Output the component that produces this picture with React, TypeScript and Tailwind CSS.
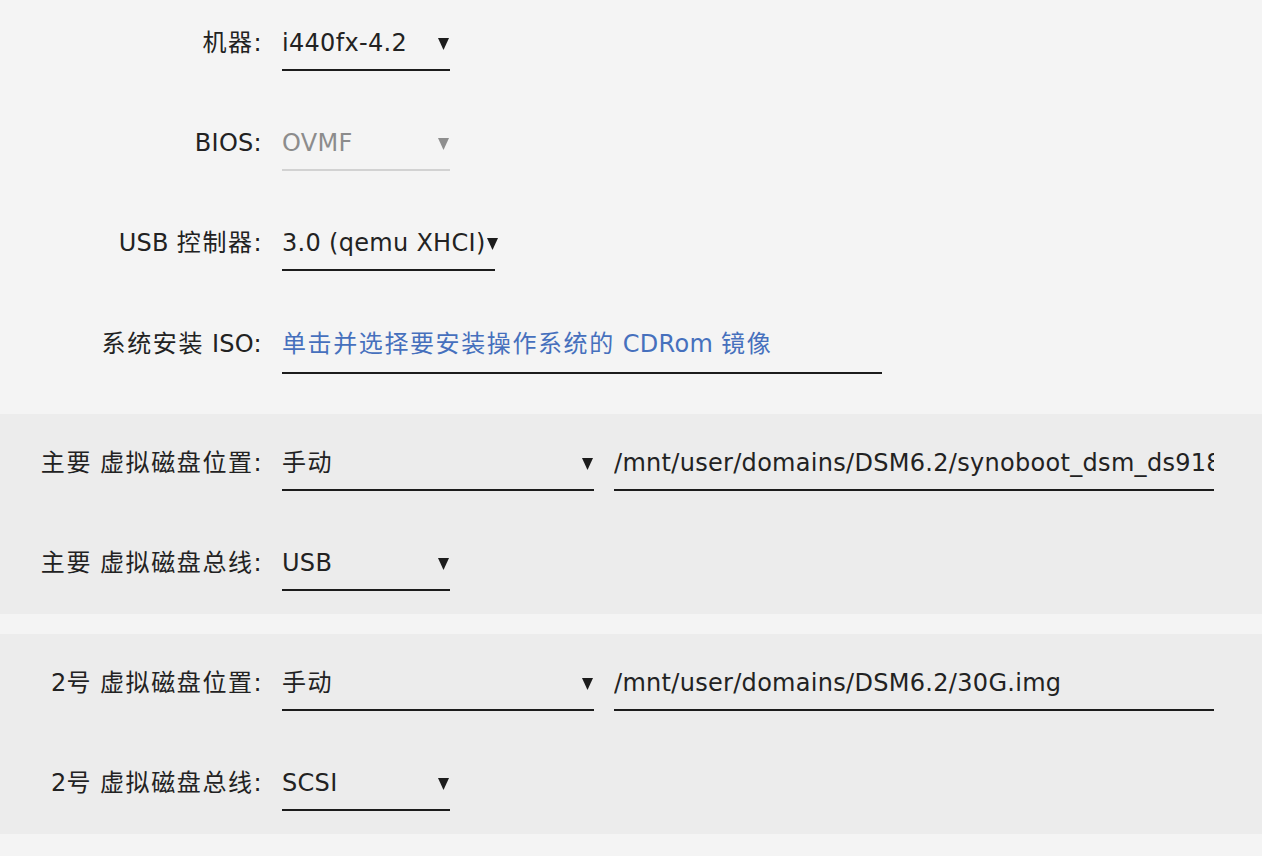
const font = {
  fontFamily: '"DejaVu Sans", "Noto Sans CJK SC", sans-serif',
};

// CJK runs sit a little wider than Noto's default advance in the reference
const T = ({ text }: { text: string }) => (
  <>
    {text.split(/([\u3000-\u9fff\uff00-\uffef]+)/).map((part, i) =>
      /[\u3000-\u9fff\uff00-\uffef]/.test(part) ? (
        <span key={i} className="tracking-[1.6px]">
          {part}
        </span>
      ) : (
        part
      )
    )}
  </>
);

const Arrow = ({ muted = false }: { muted?: boolean }) => (
  <svg width="11" height="12" viewBox="0 0 11 12" className="shrink-0">
    <polygon points="0,0 11,0 5.5,12" fill={muted ? "#8e8e8e" : "#1c1c1c"} />
  </svg>
);

const Label = ({ text }: { text: string }) => (
  <div className="w-[262px] shrink-0 text-right leading-[51px] text-[#222] whitespace-nowrap">
    <T text={text} />
  </div>
);

const Select = ({
  value,
  width,
  muted = false,
  tight = false,
}: {
  value: string;
  width: string;
  muted?: boolean;
  tight?: boolean;
}) => (
  <div
    className={`${width} h-[53px] flex items-center border-b-2 ${
      tight ? "gap-[1px]" : "justify-between pr-[1px]"
    } ${muted ? "border-[#d2d2d2] text-[#8c8c8c]" : "border-[#1c1c1c] text-[#222]"}`}
  >
    <span className="leading-[51px] whitespace-nowrap">
      <T text={value} />
    </span>
    <Arrow muted={muted} />
  </div>
);

const Input = ({ value, width, link = false }: { value: string; width: string; link?: boolean }) => (
  <div
    className={`${width} h-[53px] border-b-2 border-[#1c1c1c] overflow-hidden whitespace-nowrap leading-[51px] ${
      link ? "text-[#4670bd]" : "text-[#222]"
    }`}
  >
    <T text={value} />
  </div>
);

const Row = ({ top, children }: { top: string; children: React.ReactNode }) => (
  <div className={`h-[100px] flex items-start gap-[20px] ${top}`}>{children}</div>
);

export default function App() {
  return (
    <div
      className="w-[1262px] h-[856px] bg-[#f4f4f4] text-[24px] tracking-[0.3px] overflow-hidden"
      style={font}
    >
      <div className="h-[414px]">
        <Row top="pt-[18px]">
          <Label text="机器:" />
          <Select value="i440fx-4.2" width="w-[168px]" />
        </Row>
        <Row top="pt-[18px]">
          <Label text="BIOS:" />
          <Select value="OVMF" width="w-[168px]" muted />
        </Row>
        <Row top="pt-[18px]">
          <Label text="USB 控制器:" />
          <Select value="3.0 (qemu XHCI)" width="w-[213px]" tight />
        </Row>
        <Row top="pt-[19px]">
          <Label text="系统安装 ISO:" />
          <Input value="单击并选择要安装操作系统的 CDRom 镜像" width="w-[600px] h-[55px]" link />
        </Row>
      </div>

      <div className="h-[200px] bg-[#ececec]">
        <Row top="pt-[24px]">
          <Label text="主要 虚拟磁盘位置:" />
          <Select value="手动" width="w-[312px]" />
          <Input value="/mnt/user/domains/DSM6.2/synoboot_dsm_ds918+.img" width="w-[600px]" />
        </Row>
        <Row top="pt-[24px]">
          <Label text="主要 虚拟磁盘总线:" />
          <Select value="USB" width="w-[168px]" />
        </Row>
      </div>

      <div className="h-[20px]" />

      <div className="h-[200px] bg-[#ececec]">
        <Row top="pt-[24px]">
          <Label text="2号 虚拟磁盘位置:" />
          <Select value="手动" width="w-[312px]" />
          <Input value="/mnt/user/domains/DSM6.2/30G.img" width="w-[600px]" />
        </Row>
        <Row top="pt-[24px]">
          <Label text="2号 虚拟磁盘总线:" />
          <Select value="SCSI" width="w-[168px]" />
        </Row>
      </div>
    </div>
  );
}
